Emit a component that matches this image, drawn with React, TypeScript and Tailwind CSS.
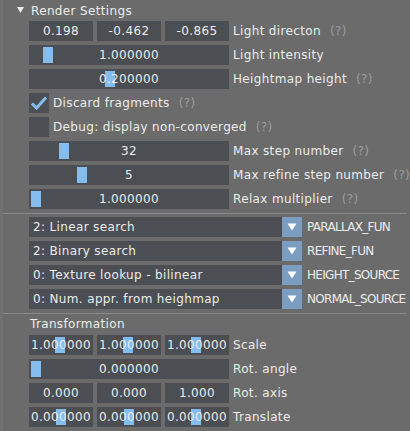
import React from "react";

const FRAME = "bg-[#4b4e52]";

function Help() {
  return <span className="ml-[9px] text-[#9c9c9c]">(?)</span>;
}

function Label({ text, help }: { text: string; help?: boolean }) {
  return (
    <span className="ml-[4px] whitespace-nowrap text-[#ececec]">
      {text}
      {help && <Help />}
    </span>
  );
}

function Slider({ value, grab, width = 200 }: { value: string; grab: number; width?: number }) {
  return (
    <div
      className={`relative h-[20px] shrink-0 ${FRAME} flex items-center justify-center text-[#ececec]`}
      style={{ width }}
    >
      <div className="absolute top-[2px] h-[16px] w-[10px] bg-[#85bcee]" style={{ left: grab }} />
      <span className="relative">{value}</span>
    </div>
  );
}

function Triple({ values, grabs }: { values: string[]; grabs?: number[] }) {
  return (
    <div className="flex shrink-0 gap-[4px]">
      {values.map((v, i) =>
        grabs ? (
          <Slider key={i} value={v} grab={grabs[i]} width={64} />
        ) : (
          <div key={i} className={`h-[20px] w-[64px] ${FRAME} flex items-center justify-center text-[#ececec]`}>
            {v}
          </div>
        )
      )}
    </div>
  );
}

function Row({ children }: { children: React.ReactNode }) {
  return <div className="flex h-[20px] items-center">{children}</div>;
}

function Checkbox({ checked }: { checked?: boolean }) {
  return (
    <div className={`h-[20px] w-[20px] shrink-0 ${FRAME} flex items-center justify-center`}>
      {checked && (
        <svg width="18" height="16" viewBox="0 0 18 16">
          <path d="M2 8.5 L6.5 13 L16 2.5" fill="none" stroke="#85bcee" strokeWidth="3" />
        </svg>
      )}
    </div>
  );
}

function Combo({ value, label }: { value: string; label: string }) {
  return (
    <Row>
      <div className={`flex h-[20px] w-[253px] shrink-0 items-center pl-[4px] ${FRAME} text-[#ececec]`}>{value}</div>
      <div className="flex h-[20px] w-[20px] shrink-0 items-center justify-center bg-[#7a9dc0]">
        <svg width="10" height="8" viewBox="0 0 10 8">
          <path d="M0.5 0.5 H9.5 L5 7.5 Z" fill="#ffffff" />
        </svg>
      </div>
      <span className="ml-[5px] whitespace-nowrap tracking-[-0.7px] text-[#ececec]">{label}</span>
    </Row>
  );
}

function Separator() {
  return <div className="-mb-px -ml-[26px] mr-[3px] h-0 border-t border-[#8a8a8a]" />;
}

export default function App() {
  return (
    <div
      className="h-[431px] w-[410px] overflow-hidden border-l-[3px] border-[#717171] bg-[#6b6b6b] text-[12px] tracking-[0.35px]"
      style={{ fontFamily: '"DejaVu Sans", Verdana, sans-serif' }}
    >
      <div className="flex h-[21px] items-center pl-[14px] text-[#ececec]">
        <svg width="7" height="6" viewBox="0 0 7 6" className="mb-[2px]">
          <path d="M0 0 H7 L3.5 6 Z" fill="#ececec" />
        </svg>
        <span className="ml-[7px]">Render Settings</span>
      </div>

      <div className="flex flex-col gap-[4px] pl-[26px]">
        <Row>
          <Triple values={["0.198", "-0.462", "-0.865"]} />
          <Label text="Light directon" help />
        </Row>
        <Row>
          <Slider value="1.000000" grab={14} />
          <Label text="Light intensity" />
        </Row>
        <Row>
          <Slider value="0.200000" grab={76} />
          <Label text="Heightmap height" help />
        </Row>
        <Row>
          <Checkbox checked />
          <Label text="Discard fragments" help />
        </Row>
        <Row>
          <Checkbox />
          <Label text="Debug: display non-converged" help />
        </Row>
        <Row>
          <Slider value="32" grab={30} />
          <Label text="Max step number" help />
        </Row>
        <Row>
          <Slider value="5" grab={48} />
          <Label text="Max refine step number" help />
        </Row>
        <Row>
          <Slider value="1.000000" grab={2} />
          <Label text="Relax multiplier" help />
        </Row>

        <Separator />

        <Combo value="2: Linear search" label="PARALLAX_FUN" />
        <Combo value="2: Binary search" label="REFINE_FUN" />
        <Combo value="0: Texture lookup - bilinear" label="HEIGHT_SOURCE" />
        <Combo value="0: Num. appr. from heighmap" label="NORMAL_SOURCE" />

        <Separator />

        <div className="flex h-[14px] items-center pl-[1px] text-[#ececec]">Transformation</div>
        <Row>
          <Triple values={["1.000000", "1.000000", "1.000000"]} grabs={[26, 26, 26]} />
          <Label text="Scale" />
        </Row>
        <Row>
          <Slider value="0.000000" grab={2} />
          <Label text="Rot. angle" />
        </Row>
        <Row>
          <Triple values={["0.000", "0.000", "1.000"]} />
          <Label text="Rot. axis" />
        </Row>
        <Row>
          <Triple values={["0.000000", "0.000000", "0.000000"]} grabs={[27, 27, 26]} />
          <Label text="Translate" />
        </Row>
      </div>
    </div>
  );
}
